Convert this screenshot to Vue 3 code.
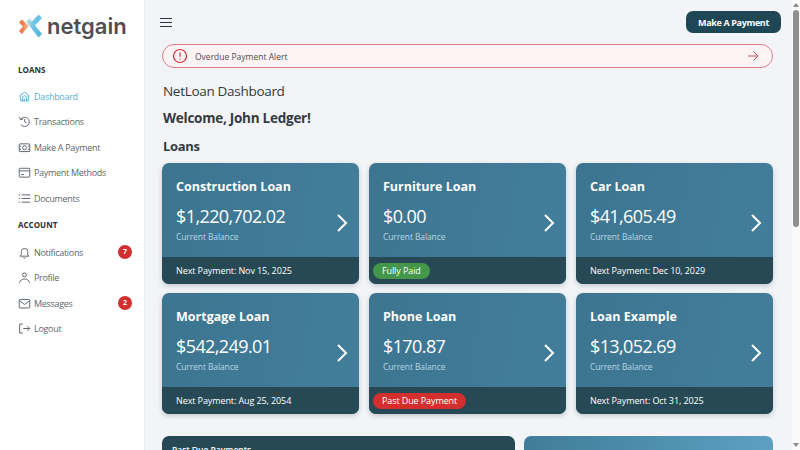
<script setup>
const loansNav = [
  { label: 'Dashboard', icon: 'home', active: true },
  { label: 'Transactions', icon: 'history' },
  { label: 'Make A Payment', icon: 'cash' },
  { label: 'Payment Methods', icon: 'card' },
  { label: 'Documents', icon: 'list' },
]

const accountNav = [
  { label: 'Notifications', icon: 'bell', badge: 7 },
  { label: 'Profile', icon: 'user' },
  { label: 'Messages', icon: 'mail', badge: 2 },
  { label: 'Logout', icon: 'logout' },
]

const icons = {
  home: 'M1.800 7.600 8 2.500l6.200 5.100M3.300 6.500V13.500h9.400V6.500M5.600 13.500V9.500a2.400 2.400 0 0 1 4.800 0v4M7.700 10.200v3.300',
  history: 'M1.800 2.500 3.200 5.800l3.200-1M3.200 5.800A5.700 5.700 0 1 1 3.600 11.800M8.200 5V8.500l2.300 1.300',
  cash: 'M2.500 3.500h11a1 1 0 0 1 1 1v7.500a1 1 0 0 1-1 1h-11a1 1 0 0 1-1-1V4.500a1 1 0 0 1 1-1zM5.600 8.200a2.400 2.400 0 1 0 4.800 0a2.400 2.400 0 1 0-4.800 0M1.500 6.300h2.400M12.100 6.300h2.400M1.500 10.200h2.400M12.100 10.200h2.400',
  card: 'M2.500 2.800h11a1 1 0 0 1 1 1v8.900a1 1 0 0 1-1 1h-11a1 1 0 0 1-1-1V3.800a1 1 0 0 1 1-1zM1.500 6h13M3.800 10.500h3.400',
  list: 'M4.500 3.500H15M4.500 8H15M4.500 12.500H15M1 3.500h1.500M1 8h1.500M1 12.500h1.500',
  bell: 'M4 10.800V7a4 4 0 0 1 8 0v3.800l1.500 1.700h-11zM6.500 14.200a1.700 1.700 0 0 0 3 0',
  user: 'M5.600 4.800a2.400 2.400 0 1 0 4.800 0a2.400 2.400 0 1 0-4.800 0M2 14.500c.4-3.200 2.800-4.700 6-4.700s5.600 1.500 6 4.700',
  mail: 'M2.500 3h11a1 1 0 0 1 1 1v8.500a1 1 0 0 1-1 1h-11a1 1 0 0 1-1-1V4a1 1 0 0 1 1-1zM1.500 4.500 8 9.200l6.500-4.700',
  logout: 'M6 2.500H2v11h4M6.500 8H14.500M11.500 5 14.500 8l-3 3',
}

const loans = [
  { name: 'Construction Loan', balance: '$1,220,702.02', next: 'Next Payment: Nov 15, 2025' },
  { name: 'Furniture Loan', balance: '$0.00', pill: 'Fully Paid', tone: 'paid' },
  { name: 'Car Loan', balance: '$41,605.49', next: 'Next Payment: Dec 10, 2029' },
  { name: 'Mortgage Loan', balance: '$542,249.01', next: 'Next Payment: Aug 25, 2054' },
  { name: 'Phone Loan', balance: '$170.87', pill: 'Past Due Payment', tone: 'due' },
  { name: 'Loan Example', balance: '$13,052.69', next: 'Next Payment: Oct 31, 2025' },
]
</script>

<template>
  <div class="shell">
    <aside class="sidebar">
      <div class="logo">
        <svg width="26" height="26" viewBox="0 0 26 26" class="logo-mark">
          <defs>
            <linearGradient id="orangeFade" x1="0" x2="1" y1="0" y2="0">
              <stop offset="0.300" stop-color="#ee7a45" />
              <stop offset="1" stop-color="#f4c8ae" />
            </linearGradient>
            <linearGradient id="blueFade" x1="0" x2="1" y1="0" y2="0.600">
              <stop offset="0" stop-color="#d9dfe0" />
              <stop offset="0.500" stop-color="#72c6e6" />
              <stop offset="1" stop-color="#4fb7e0" />
            </linearGradient>
          </defs>
          <path d="M1 9.500 4 6.500 11 13l-7 8-3-3 4-4.500z" fill="url(#orangeFade)" />
          <path d="M13 9.500 20.500 1.500 24 5l-7.500 8z" fill="#69c4e8" />
          <path d="M8 8.500 11.500 5.500 24 21l-3.500 3.500z" fill="url(#blueFade)" />
        </svg>
        <span class="logo-text">netgain</span>
      </div>

      <h4 class="nav-title">LOANS</h4>
      <ul class="nav">
        <li v-for="item in loansNav" :key="item.label" :class="{ active: item.active }">
          <svg width="13" height="13" viewBox="0 0 16 16" class="nav-icon"><path :d="icons[item.icon]" /></svg>
          <span>{{ item.label }}</span>
        </li>
      </ul>

      <h4 class="nav-title account">ACCOUNT</h4>
      <ul class="nav nav-account">
        <li v-for="item in accountNav" :key="item.label">
          <svg width="13" height="13" viewBox="0 0 16 16" class="nav-icon"><path :d="icons[item.icon]" /></svg>
          <span>{{ item.label }}</span>
          <b v-if="item.badge" class="badge">{{ item.badge }}</b>
        </li>
      </ul>
    </aside>

    <main class="main">
      <header class="topbar">
        <svg width="14" height="14" viewBox="0 0 14 14" class="burger">
          <path d="M1 3.500h12M1 7.500h12M1 11.500h12" />
        </svg>
        <button class="pay-btn">Make A Payment</button>
      </header>

      <div class="alert">
        <svg width="16" height="16" viewBox="0 0 16 16" class="alert-icon">
          <circle cx="8" cy="8" r="6.500" />
          <path d="M8 4.500v4.200M8 10.600v1" />
        </svg>
        <span class="alert-text">Overdue Payment Alert</span>
        <svg width="12" height="12" viewBox="0 0 12 12" class="alert-arrow">
          <path d="M1 6h10M6.500 1.500 11 6l-4.500 4.500" />
        </svg>
      </div>

      <h1 class="page-title">NetLoan Dashboard</h1>
      <h2 class="welcome">Welcome, John Ledger!</h2>
      <h3 class="section">Loans</h3>

      <section class="grid">
        <article v-for="loan in loans" :key="loan.name" class="loan">
          <div class="loan-body">
            <div>
              <div class="loan-name">{{ loan.name }}</div>
              <div class="loan-balance">{{ loan.balance }}</div>
              <div class="loan-caption">Current Balance</div>
            </div>
            <svg width="14" height="20" viewBox="0 0 14 20" class="chevron"><path d="M3 2l8 8-8 8" /></svg>
          </div>
          <div class="loan-foot">
            <span v-if="loan.next" class="next">{{ loan.next }}</span>
            <span v-else class="pill" :class="loan.tone">{{ loan.pill }}</span>
          </div>
        </article>
      </section>

      <section class="bottom">
        <div class="panel dark"><span>Past Due Payments</span></div>
        <div class="panel light"></div>
      </section>
    </main>

    <div class="scrollbar">
      <i class="arrow up"></i>
      <div class="thumb"></div>
      <div class="track"></div>
      <i class="arrow down"></i>
    </div>
  </div>
</template>

<style scoped>
.shell {
  display: flex;
  width: 800px;
  height: 450px;
  overflow: hidden;
  background: #f2f4f7;
  font-family: "Open Sans", "Noto Sans", sans-serif;
  color: #343a40;
}

.sidebar {
  flex: 0 0 144px;
  background: #fff;
  padding: 13px 0 0 18px;
  box-sizing: border-box;
}

.logo {
  display: flex;
  align-items: center;
  gap: 3px;
  height: 26px;
}

.logo-text {
  font-family: "Inter", sans-serif;
  font-size: 22px;
  font-weight: 600;
  color: #4f4f52;
  line-height: 26px;
  margin-top: -1px;
}

.nav-title {
  margin: 25px 0 0;
  font-size: 8px;
  line-height: 12px;
  font-weight: 700;
  color: #2b2f33;
}

.nav-title.account {
  margin-top: 7.500px;
}

.nav {
  list-style: none;
  margin: 7.500px 0 0;
  padding: 0;
}

.nav.nav-account {
  margin-top: 9px;
}

.nav li {
  display: flex;
  align-items: center;
  height: 25.500px;
  font-size: 9px;
  letter-spacing: -.3px;
  color: #5f666d;
}

.nav li.active {
  color: #5baed6;
}

.nav-icon {
  margin-right: 3px;
  fill: none;
  stroke: currentColor;
  stroke-width: 1.200;
}

.badge {
  margin-left: auto;
  margin-right: 12px;
  width: 14px;
  height: 14px;
  border-radius: 50%;
  background: #d32f2f;
  color: #fff;
  font-size: 7px;
  letter-spacing: 0;
  line-height: 14px;
  text-align: center;
}

.main {
  flex: 1;
  min-width: 0;
  padding: 11px 11px 0 17px;
  box-sizing: border-box;
  border-left: 1px solid #eceef1;
}

.topbar {
  display: flex;
  align-items: center;
  justify-content: space-between;
  height: 22px;
}

.burger {
  margin-left: -3px;
  fill: none;
  stroke: #2f343a;
  stroke-width: 1;
}

.pay-btn {
  height: 22px;
  width: 95px;
  padding: 0;
  border: none;
  border-radius: 7px;
  background: #1f4654;
  color: #fff;
  font-family: inherit;
  font-size: 9px;
  font-weight: 700;
  letter-spacing: -.35px;
}

.alert {
  display: flex;
  align-items: center;
  width: 611px;
  height: 24px;
  margin-top: 11px;
  padding: 0 13px 0 9px;
  box-sizing: border-box;
  background: #fdf3f4;
  border: 1px solid #d9808c;
  border-radius: 12px;
}

.alert-icon {
  fill: none;
  stroke: #c9303f;
  stroke-width: 1.200;
}

.alert-text {
  margin-left: 7px;
  font-size: 8.500px;
  color: #4a4f55;
}

.alert-arrow {
  margin-left: auto;
  fill: none;
  stroke: #d2505c;
  stroke-width: 1;
}

.page-title {
  margin: 13px 0 0 1px;
  font-size: 13.500px;
  letter-spacing: -.3px;
  line-height: 20px;
  font-weight: 400;
  color: #343a40;
}

.welcome {
  margin: 7px 0 0 1px;
  font-size: 13.500px;
  letter-spacing: -.25px;
  line-height: 20px;
  font-weight: 700;
}

.section {
  margin: 8px 0 0 1px;
  font-size: 13px;
  letter-spacing: -.3px;
  line-height: 20px;
  font-weight: 700;
}

.grid {
  display: grid;
  grid-template-columns: repeat(3, 197.300px);
  gap: 9px 9.700px;
  margin-top: 7px;
}

.loan {
  height: 121px;
  display: flex;
  flex-direction: column;
  border-radius: 7px;
  overflow: hidden;
  background: linear-gradient(100deg, #3d7590, #427e9b);
  box-shadow: 0 2px 5px rgba(30, 50, 70, .22);
  color: #fff;
}

.loan-body {
  flex: 1;
  display: flex;
  justify-content: space-between;
  align-items: center;
  padding: 2px 10px 0 14px;
}

.loan-name {
  font-size: 12.500px;
  line-height: 16px;
  font-weight: 700;
}

.loan-balance {
  margin-top: 9px;
  font-size: 18px;
  letter-spacing: -.6px;
  line-height: 24px;
  font-weight: 500;
}

.loan-caption {
  margin-top: 3px;
  font-size: 8.500px;
  letter-spacing: -.1px;
  line-height: 12px;
  color: #b5d6e6;
}

.chevron {
  margin-top: 24px;
  fill: none;
  stroke: #fff;
  stroke-width: 2;
}

.loan-foot {
  flex: 0 0 27px;
  display: flex;
  align-items: center;
  padding: 0 4px;
  background: #264955;
}

.next {
  padding-left: 10px;
  font-size: 9px;
  letter-spacing: -.1px;
  font-weight: 500;
}

.pill {
  height: 16px;
  padding: 0 9px;
  border-radius: 8px;
  font-size: 9px;
  letter-spacing: -.1px;
  line-height: 16px;
  font-weight: 500;
}

.pill.paid {
  background: #43964a;
}

.pill.due {
  background: #d32f2f;
}

.bottom {
  display: grid;
  grid-template-columns: 353px 249px;
  gap: 9px;
  margin-top: 22px;
}

.panel {
  height: 120px;
  border-radius: 7px;
}

.panel.dark {
  padding: 8px 10px;
  background: #264955;
  color: #fff;
  font-size: 8.500px;
  font-weight: 600;
}

.panel.light {
  background: linear-gradient(100deg, #3f7c98, #5fa3c4);
}

.scrollbar {
  flex: 0 0 8px;
  display: flex;
  flex-direction: column;
  align-items: center;
  background: #fafafa;
}

.arrow {
  width: 0;
  height: 0;
  border-left: 3px solid transparent;
  border-right: 3px solid transparent;
}

.arrow.up {
  margin-top: 3px;
  border-bottom: 4px solid #8a8a8a;
}

.arrow.down {
  margin-bottom: 3px;
  border-top: 4px solid #8a8a8a;
}

.thumb {
  width: 6px;
  height: 217px;
  margin-top: 3px;
  border-radius: 3px;
  background: #8f8f8f;
}

.track {
  flex: 1;
}
</style>

<style>
html, body {
  margin: 0;
  overflow: hidden;
}
</style>
